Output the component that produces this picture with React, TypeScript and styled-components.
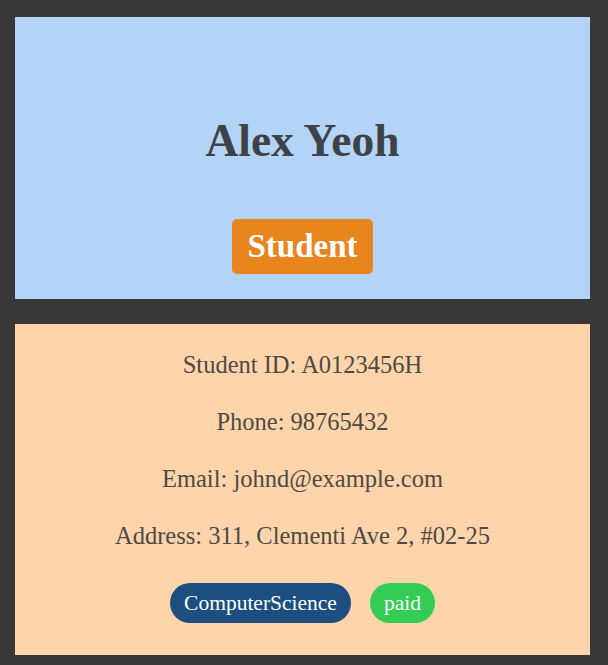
import styled, { createGlobalStyle } from "styled-components";

const GlobalStyle = createGlobalStyle`
  html, body {
    margin: 0;
    background: #383838;
  }
  body {
    font-family: "Liberation Serif", "Times New Roman", serif;
  }
`;

const Page = styled.div`
  padding: 17px 18px 10px 15px;
  display: flex;
  flex-direction: column;
  gap: 25px;
`;

const Card = styled.section<{ $tone: string }>`
  background: ${p => p.$tone};
  display: flex;
  flex-direction: column;
  align-items: center;
`;

const HeaderCard = styled(Card)`
  height: 282px;
  box-sizing: border-box;
  padding-top: 99px;
`;

const Name = styled.h1`
  margin: 0;
  font-size: 45.5px;
  line-height: 50px;
  font-weight: bold;
  color: #3e4246;
`;

const RoleBadge = styled.div`
  margin-top: 53px;
  height: 55px;
  width: 141px;
  border-radius: 5px;
  background: #e8851c;
  color: #ffffff;
  font-size: 33px;
  line-height: 55px;
  font-weight: bold;
  text-align: center;
`;

const DetailsCard = styled(Card)`
  height: 331px;
  box-sizing: border-box;
  padding-top: 27px;
`;

const Line = styled.p`
  margin: 0 0 29px;
  font-size: 24.5px;
  line-height: 28px;
  color: #4d4945;
  &:last-of-type {
    margin-bottom: 33px;
  }
`;

const Tags = styled.div`
  display: flex;
  gap: 19px;
`;

const Tag = styled.span<{ $bg: string }>`
  height: 40px;
  border-radius: 20px;
  padding: 0 14px;
  background: ${p => p.$bg};
  color: #ffffff;
  font-size: 21.5px;
  line-height: 40px;
`;

const details = [
  "Student ID: A0123456H",
  "Phone: 98765432",
  "Email: johnd@example.com",
  "Address: 311, Clementi Ave 2, #02-25",
];

export default function App() {
  return (
    <>
      <GlobalStyle />
      <Page>
        <HeaderCard $tone="#b3d4f6">
          <Name>Alex Yeoh</Name>
          <RoleBadge>Student</RoleBadge>
        </HeaderCard>
        <DetailsCard $tone="#fed5aa">
          {details.map(d => (
            <Line key={d}>{d}</Line>
          ))}
          <Tags>
            <Tag $bg="#1c4f80">ComputerScience</Tag>
            <Tag $bg="#33cd56">paid</Tag>
          </Tags>
        </DetailsCard>
      </Page>
    </>
  );
}
